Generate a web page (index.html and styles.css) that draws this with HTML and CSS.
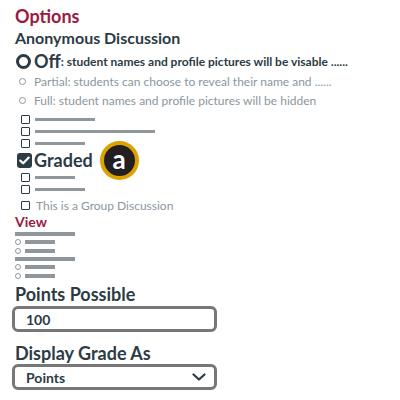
FILE: index.html
```html
<!DOCTYPE html>
<html>
<head>
<meta charset="utf-8">
<link rel="stylesheet" href="styles.css">
</head>
<body>
<div class="page">
  <h1 class="title">Options</h1>
  <h2 class="subtitle">Anonymous Discussion</h2>
  <div class="radio-row big">
    <span class="radio-big"></span>
    <span class="off-label">Off</span><span class="off-desc">: student names and profile pictures will be visable ......</span>
  </div>
  <div class="radio-row small">
    <span class="radio-small"></span>
    <span class="muted">Partial: students can choose to reveal their name and ......</span>
  </div>
  <div class="radio-row small">
    <span class="radio-small"></span>
    <span class="muted">Full: student names and profile pictures will be hidden</span>
  </div>

  <div class="checks first">
    <div class="check-row"><span class="cb"></span><span class="bar" style="width:60px"></span></div>
    <div class="check-row"><span class="cb"></span><span class="bar" style="width:120px"></span></div>
    <div class="check-row"><span class="cb"></span><span class="bar" style="width:50px"></span></div>
  </div>
  <div class="graded-row">
    <span class="cb-big"><svg width="11" height="9" viewBox="0 0 11 9"><path d="M1.3 4.6 L4.2 7.3 L9.7 1.6" fill="none" stroke="#fff" stroke-width="2.2" stroke-linecap="round" stroke-linejoin="round"/></svg></span>
    <span class="graded">Graded</span>
    <span class="badge">a</span>
  </div>
  <div class="checks">
    <div class="check-row"><span class="cb"></span><span class="bar" style="width:40px"></span></div>
    <div class="check-row"><span class="cb"></span><span class="bar" style="width:50px"></span></div>
  </div>
  <div class="group-row"><span class="cb"></span><span class="muted">This is a Group Discussion</span></div>

  <h3 class="view">View</h3>
  <div class="view-list">
    <span class="vbar"></span>
    <div class="vrow"><span class="vradio"></span><span class="sbar"></span></div>
    <div class="vrow"><span class="vradio"></span><span class="sbar"></span></div>
    <span class="vbar"></span>
    <div class="vrow"><span class="vradio"></span><span class="sbar"></span></div>
    <div class="vrow"><span class="vradio"></span><span class="sbar"></span></div>
  </div>

  <label class="field-label">Points Possible</label>
  <div class="field">100</div>
  <label class="field-label second">Display Grade As</label>
  <div class="field select"><span>Points</span>
    <svg class="chev" width="14" height="8" viewBox="0 0 14 8"><path d="M1.5 1.5 L7 6.5 L12.5 1.5" fill="none" stroke="#2d3b45" stroke-width="2.2" stroke-linecap="round" stroke-linejoin="round"/></svg>
  </div>
</div>
</body>
</html>
```

FILE: styles.css
```css
html, body { margin: 0; padding: 0; background: #fff; }
body { font-family: Lato, "Open Sans", sans-serif; color: #2d3b45; }
.page { padding: 5px 0 0 15px; width: 385px; }
.title { margin: 0; font-size: 18px; font-weight: 700; color: #9b1b40; line-height: 22px; }
.subtitle { margin: 1px 0 0; font-size: 16px; font-weight: 700; line-height: 20px; }
.radio-row { display: flex; align-items: center; }
.radio-row.big { height: 22px; margin-top: 2px; }
.radio-row.small { height: 20px; margin-top: -1px; }
.radio-big { width: 9px; height: 9px; border: 3px solid #2d3b45; border-radius: 50%; margin: 0 3px 0 1px; }
.off-label { font-size: 18px; font-weight: 700; }
.off-desc { font-size: 12px; font-weight: 700; }
.radio-small { width: 5px; height: 5px; border: 1.5px solid #8b969e; border-radius: 50%; margin: 0 8px 0 4px; }
.muted { font-size: 12px; color: #8b969e; }
.checks { display: flex; flex-direction: column; }
.checks.first { margin-top: 3px; }
.check-row { display: flex; align-items: center; height: 12px; padding-left: 6px; }
.cb { width: 7px; height: 7px; border: 1px solid #2d3b45; border-radius: 1px; box-sizing: content-box; margin-right: 5px; flex: none; }
.bar { height: 3px; background: #8f979c; }
.graded-row { display: flex; align-items: center; height: 22px; }
.cb-big { width: 15px; height: 15px; border-radius: 3px; background: #2d3b45; display: flex; align-items: center; justify-content: center; margin: 0 2px 0 2px; flex: none; }
.graded { font-size: 18px; font-weight: 700; }
.badge { width: 31px; height: 28px; padding-bottom: 3px; border-radius: 50%; background: #231f20; border: 4px solid #dca200; color: #fff; font-size: 26px; font-weight: 700; display: flex; align-items: center; justify-content: center; margin-left: 7px; line-height: 1; box-sizing: content-box; flex: none; }
.group-row { display: flex; align-items: center; height: 18px; padding-left: 6px; margin-top: 1px; }
.group-row .cb { margin-right: 6px; }
.view { margin: 0; font-size: 14px; font-weight: 700; color: #9b1b40; line-height: 16px; }
.view-list { display: flex; flex-direction: column; }
.vbar { display: block; width: 60px; height: 4px; background: #8f979c; margin: 2px 0 1px; }
.vrow { display: flex; align-items: center; height: 9px; }
.vradio { width: 4px; height: 4px; border: 1px solid #8f979c; border-radius: 50%; margin-right: 4px; }
.sbar { width: 30px; height: 4px; background: #8f979c; }
.field-label { display: block; font-size: 18px; font-weight: 700; margin-top: 3px; line-height: 22px; }
.field-label.second { margin-top: 10px; }
.field { box-sizing: border-box; width: 205px; height: 26px; margin-left: -3px; margin-top: 1px; border: 3px solid #777; border-radius: 6px; font-size: 14px; font-weight: 700; display: flex; align-items: center; padding-left: 11px; }
.field.select { margin-top: 0; justify-content: space-between; padding-right: 8px; }
.chev { display: block; }
```
